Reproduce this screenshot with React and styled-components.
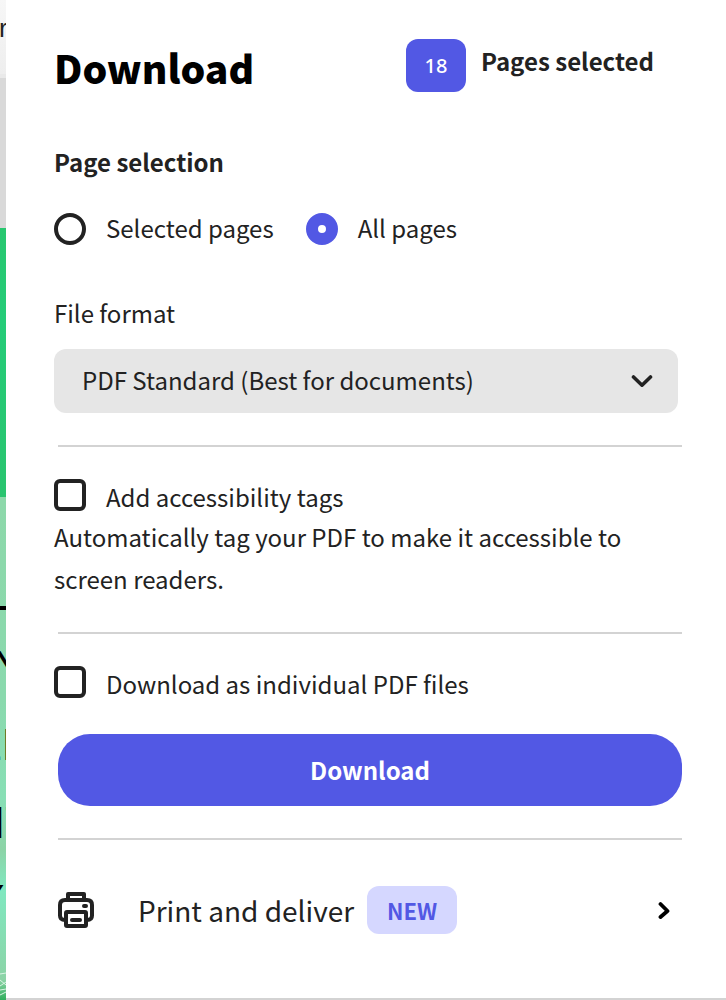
import { useState } from 'react';
import styled, { createGlobalStyle } from 'styled-components';

const GlobalStyle = createGlobalStyle`
  *, *::before, *::after {
    box-sizing: border-box;
  }

  body {
    margin: 0;
    background: #ffffff;
    color: #222222;
    font-family: "Noto Sans CJK SC", "Noto Sans", sans-serif;
    font-size: 24px;
    line-height: 30px;
  }
`;

const Page = styled.div`
  display: flex;
  min-height: 100vh;
`;

/* Editor that shows beside the panel */
const Editor = styled.div`
  display: flex;
  flex-direction: column;
  flex: 0 0 6px;
  height: 100vh;
  overflow: hidden;
  background: #d9d9d9;
  color: #000000;
  font-family: "Liberation Sans", sans-serif;
`;

const EditorBar = styled.div`
  flex: 0 0 78px;
  padding-top: 13px;
  border-bottom: 4px solid #e9e9e9;
  background: linear-gradient(#f7f7f7, #eeeeee);
  color: #222222;
  font-size: 26px;
  text-indent: -1px;
`;

const Artwork = styled.div`
  flex: 1;
  margin-top: 150px;
  background: linear-gradient(#28c76f, #25cc78 12%, #2dbd66 55%, #25cb76 66%, #2fbd66);
`;

const ArtworkSky = styled.div`
  height: 269px;
`;

const ArtworkText = styled.div`
  height: 503px;
  padding-top: 109px;
  background: linear-gradient(#8dd8aa, #8ad9ad 40%, #88dfb5 60%, #8cd3a6 70%, #80e8c0 78%, #8cd3a6 96%, #2fae5c);
`;

const ArtworkRule = styled.div`
  height: 4px;
  margin-bottom: 18px;
  background: #000000;
`;

const ArtworkLine = styled.div`
  height: 78px;
  font-size: 44px;
  line-height: 78px;
  text-indent: ${({ $indent }) => $indent}px;
  white-space: nowrap;
`;

const Scribble = styled.svg`
  display: block;
  margin-top: 32px;
`;

const Panel = styled.form`
  flex: 1;
  min-width: 0;
  padding: 39px 44px 64px 48px;
  border-bottom: 2px solid #d3d3d3;
`;

const Header = styled.header`
  display: flex;
  align-items: flex-start;
  justify-content: space-between;
  margin-right: 28px;
`;

const Title = styled.h1`
  margin: 0;
  color: #000000;
  font-size: 39px;
  font-weight: 900;
  line-height: 56px;
`;

const PageCount = styled.div`
  display: flex;
  gap: 15px;
  font-weight: 700;
  line-height: 44px;
`;

const CountBadge = styled.span`
  width: 60px;
  border-radius: 12px;
  background: #5258e4;
  color: #ffffff;
  font-family: "Noto Sans", sans-serif;
  font-size: 20px;
  font-weight: 500;
  line-height: 53px;
  text-align: center;
`;

const Fieldset = styled.fieldset`
  margin: 52px 4px 0 0;
  padding: 0;
  border: 0;
`;

const Legend = styled.legend`
  padding: 0;
  font-weight: 700;
`;

const RadioRow = styled.div`
  display: flex;
  gap: 32px;
  margin-top: 36px;
`;

const RadioLabel = styled.label`
  display: flex;
  gap: 20px;
`;

const Radio = styled.input`
  appearance: none;
  width: 32px;
  height: 32px;
  margin: 0;
  border: 4px solid #222222;
  border-radius: 50%;
  background: #ffffff;

  &:checked {
    border: 12px solid #5258e4;
  }
`;

const Field = styled.div`
  display: flex;
  flex-direction: column;
  gap: 21px;
  margin: 53px 4px 32px 0;
`;

const SelectBox = styled.div`
  display: grid;
  align-items: center;

  > * {
    grid-area: 1 / 1;
  }

  svg {
    justify-self: end;
    margin-right: 25px;
    pointer-events: none;
  }
`;

const Select = styled.select`
  appearance: none;
  width: 100%;
  height: 64px;
  padding: 0 60px 2px 28px;
  border: 0;
  border-radius: 12px;
  background: #e6e6e6;
  color: inherit;
  font: inherit;
`;

const Rule = styled.hr`
  height: 2px;
  margin: 0 0 0 4px;
  border: 0;
  background: #d3d3d3;
`;

const CheckField = styled.div`
  margin: 32px 0;
`;

const CheckLabel = styled.label`
  display: flex;
  gap: 20px;
  line-height: 36px;
`;

const Checkbox = styled.input`
  appearance: none;
  width: 32px;
  height: 32px;
  margin: 0;
  border: 4px solid #222222;
  border-radius: 6px;
  background: #ffffff;

  &:checked {
    background: #5258e4;
  }
`;

const Description = styled.p`
  margin: 0;
  padding-top: 1px;
  line-height: 42px;
`;

const DownloadButton = styled.button`
  display: block;
  width: calc(100% - 4px);
  height: 72px;
  margin: 0 0 32px 4px;
  border: 0;
  border-radius: 32px;
  background: #5258e4;
  color: #ffffff;
  font: inherit;
  font-weight: 700;
  cursor: pointer;
`;

const PrintButton = styled.button`
  display: flex;
  align-items: center;
  width: calc(100% - 4px);
  margin: 46px 0 0 4px;
  padding: 0 12px 0 0;
  border: 0;
  background: none;
  color: inherit;
  font: inherit;
  font-size: 28px;
  cursor: pointer;
`;

const PrintText = styled.span`
  margin: 0 13px 0 44px;
`;

const NewBadge = styled.span`
  width: 90px;
  margin-right: auto;
  border-radius: 12px;
  background: #d5d7ff;
  color: #5258e4;
  font-size: 22px;
  font-weight: 700;
  line-height: 48px;
  text-align: center;
`;

const ChevronDown = () => (
  <svg width="22" height="14" viewBox="0 0 22 14" fill="none" aria-hidden="true">
    <path d="M2.5 3L11 11.2L19.5 3" stroke="#222222" strokeWidth="3.6" strokeLinecap="round" strokeLinejoin="round" />
  </svg>
);

const ChevronRight = () => (
  <svg width="12" height="18" viewBox="0 0 12 18" fill="none" aria-hidden="true">
    <path d="M2.5 3L9.5 10L2.5 16" stroke="#000000" strokeWidth="3.8" strokeLinecap="round" strokeLinejoin="round" />
  </svg>
);

const PrinterIcon = () => (
  <svg width="36" height="36" viewBox="0 0 36 36" fill="none" stroke="#222222" strokeWidth="4" aria-hidden="true">
    <path d="M10 8V2H26V8" strokeLinejoin="round" />
    <path d="M7 28C4 28 2 26.5 2 23.5V13C2 9.5 4 8 7 8H29C32 8 34 9.5 34 13V23.5C34 26.5 32 28 29 28" />
    <rect x="8" y="20" width="20" height="14" rx="1" />
    <path d="M14 28H22M26 14H28" strokeLinecap="round" />
  </svg>
);

const App = () => {
  const [pages, setPages] = useState('all');

  return (
    <>
      <GlobalStyle />
      <Page>
        <Editor aria-hidden="true">
          <EditorBar>r</EditorBar>
          <Artwork>
            <ArtworkSky />
            <ArtworkText>
              <ArtworkRule />
              <ArtworkLine $indent={-8}>N</ArtworkLine>
              <ArtworkLine $indent={-23}>LI</ArtworkLine>
              <ArtworkLine $indent={-7}>IT</ArtworkLine>
              <ArtworkLine $indent={-25}>Y</ArtworkLine>
              <Scribble width="6" height="28" viewBox="0 0 6 28" fill="none" stroke="#d9f3e3">
                <path d="M0 2L6 1M0 8L6 13M0 14L6 10M0 18L6 17M0 23L6 20" />
              </Scribble>
            </ArtworkText>
          </Artwork>
        </Editor>
        <Panel onSubmit={(e) => e.preventDefault()}>
          <Header>
            <Title>Download</Title>
            <PageCount>
              <CountBadge>18</CountBadge>
              <span>Pages selected</span>
            </PageCount>
          </Header>

          <Fieldset>
            <Legend>Page selection</Legend>
            <RadioRow>
              <RadioLabel>
                <Radio type="radio" name="pages" checked={pages === 'selected'} onChange={() => setPages('selected')} />
                Selected pages
              </RadioLabel>
              <RadioLabel>
                <Radio type="radio" name="pages" checked={pages === 'all'} onChange={() => setPages('all')} />
                All pages
              </RadioLabel>
            </RadioRow>
          </Fieldset>

          <Field>
            <label htmlFor="format">File format</label>
            <SelectBox>
              <Select id="format">
                <option>PDF Standard (Best for documents)</option>
              </Select>
              <ChevronDown />
            </SelectBox>
          </Field>

          <Rule />
          <CheckField>
            <CheckLabel>
              <Checkbox type="checkbox" aria-describedby="tags-help" />
              Add accessibility tags
            </CheckLabel>
            <Description id="tags-help">
              Automatically tag your PDF to make it accessible to screen readers.
            </Description>
          </CheckField>

          <Rule />
          <CheckField>
            <CheckLabel>
              <Checkbox type="checkbox" />
              Download as individual PDF files
            </CheckLabel>
          </CheckField>
          <DownloadButton type="submit">Download</DownloadButton>

          <Rule />
          <PrintButton type="button">
            <PrinterIcon />
            <PrintText>Print and deliver</PrintText>
            <NewBadge>NEW</NewBadge>
            <ChevronRight />
          </PrintButton>
        </Panel>
      </Page>
    </>
  );
};

export default App;
